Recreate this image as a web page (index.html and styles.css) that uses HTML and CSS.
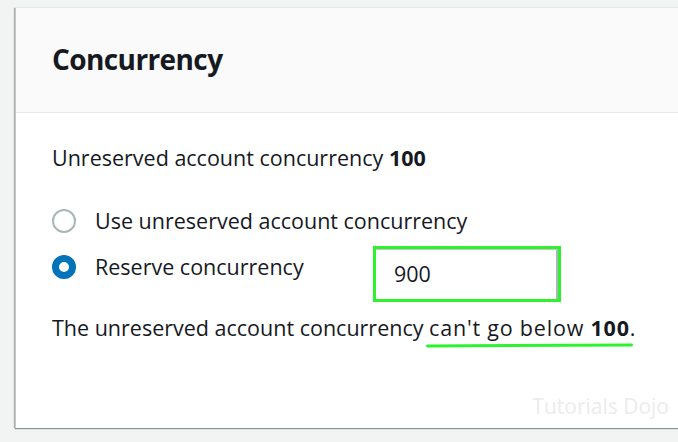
FILE: index.html
```html
<!DOCTYPE html>
<html>
<head>
<meta charset="utf-8">
<link rel="stylesheet" href="styles.css">
</head>
<body>
<div class="card">
  <div class="card-header"><h2>Concurrency</h2></div>
  <div class="card-body">
    <p class="info">Unreserved account concurrency <b>100</b></p>
    <div class="radios">
      <label class="radio"><span class="dot"></span>Use unreserved account concurrency</label>
      <div class="reserve-row">
        <label class="radio"><span class="dot checked"></span>Reserve concurrency</label>
        <div class="input-hl"><div class="input">900</div></div>
      </div>
    </div>
    <p class="note">The unreserved account concurrency <span class="ul">can't go below <b>100</b>.</span></p>
    <div class="watermark">Tutorials Dojo</div>
  </div>
</div>
</body>
</html>
```
FILE: styles.css
```css
html, body { margin: 0; padding: 0; }
body {
  background: #f2f3f3;
  width: 678px;
  height: 442px;
  overflow: hidden;
  font-family: "Open Sans", "Noto Sans", sans-serif;
  color: #16191f;
}
.card {
  margin: 8px 0 0 15px;
  width: 663px;
  height: 420px;
  background: #fff;
  border-left: 1px solid #c5c9c9;
  box-shadow: 0 1px 1px 0 #8c9191, -1px 0 1px 0 #b0b5b5;
  position: relative;
}
.card-header {
  height: 104px;
  background: #fafafa;
  border-bottom: 1px solid #e6e9e9;
  display: flex;
  align-items: center;
  padding-left: 36px;
}
.card-header h2 {
  margin: 0;
  font-size: 28px;
  font-weight: 700;
  letter-spacing: -0.6px;
  padding-bottom: 2px;
}
.card-body { padding: 32px 0 0 36px; }
.info { margin: 0; font-size: 21.5px; line-height: 26px; }
.radios { margin-top: 37px; display: flex; flex-direction: column; }
.radio {
  display: flex;
  align-items: center;
  font-size: 21.5px;
  line-height: 26px;
  height: 26px;
}
.radio + .reserve-row { margin-top: 20px; }
.dot {
  width: 24px; height: 24px;
  border: 2px solid #aab7b8;
  border-radius: 50%;
  box-sizing: border-box;
  margin-right: 19px;
  background: #fff;
  flex: none;
}
.dot.checked { border: 7px solid #0073bb; }
.reserve-row { display: flex; align-items: flex-start; height: 26px; }
.reserve-row .radio { width: 321px; }
.input-hl {
  margin-top: -8px;
  width: 188px;
  height: 56px;
  box-sizing: border-box;
  border: 3px solid #2ff22f;
  display: flex;
}
.input {
  flex: 1;
  border-top: 1px solid #c3c9c9;
  border-right: 2px solid #aab7b8;
  font-size: 21.5px;
  line-height: 48px;
  padding-left: 18px;
}
.note { margin: 35px 0 0; font-size: 21.5px; line-height: 26px; }
.ul { position: relative; letter-spacing: 0.8px; }
.ul::after {
  content: "";
  position: absolute;
  left: -3px; right: 3px;
  bottom: -5px;
  height: 3px;
  background: #2ff22f;
  border-radius: 2px;
  transform: rotate(-0.3deg);
}
.watermark {
  position: absolute;
  right: 10px;
  bottom: 8px;
  font-size: 21px;
  color: #ececec;
}
```
